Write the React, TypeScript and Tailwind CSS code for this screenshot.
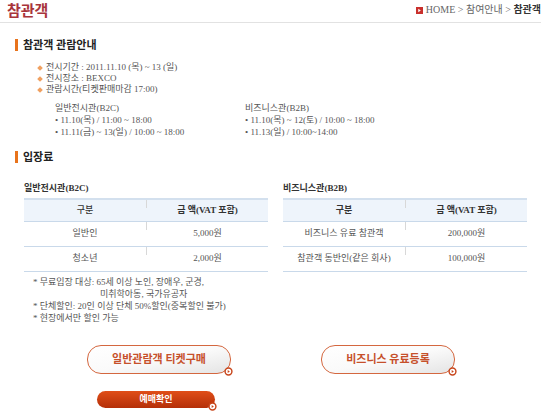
import React from "react";

type Props = { children?: React.ReactNode };

const ArrowDot = ({ className }: { className?: string }) => (
  <svg viewBox="0 0 10 10" className={className}>
    <circle cx="5" cy="5" r="3.8" fill="#fff" stroke="#c8461c" strokeWidth="1.6" />
    <path d="M4.1 3.3 L6.5 5 L4.1 6.7Z" fill="#c8461c" />
  </svg>
);

const SectionTitle = ({ children }: Props) => (
  <div className="flex items-center gap-[5px] pl-[15px] h-[14px]">
    <span className="w-[3px] h-[12px] bg-[#e8731c]" />
    <h2 className="text-[11px] leading-[14px] font-bold text-[#222]">{children}</h2>
  </div>
);

type Row = { label: string; price: string };

const PriceTable = ({ title, rows, boldHead }: { title: string; rows: Row[]; boldHead?: boolean }) => (
  <div className="w-[244px]">
    <div className="text-[9px] leading-[12px] font-bold text-[#333]">{title}</div>
    <div className="mt-[4px] border-t-2 border-[#d3e0ee]">
      <div className="flex h-[22px] bg-[#eef4fb] border-b border-[#c9d9ea] text-[9px] text-[#333]">
        <div className={`w-[122px] flex items-center justify-center ${boldHead ? "font-bold" : "font-medium"}`}>구분</div>
        <span className="w-px h-[8px] bg-[#d8d8d8]" />
        <div className="flex-1 flex items-center justify-center font-bold">금 액(VAT 포함)</div>
      </div>
      {rows.map((r) => (
        <div key={r.label} className="flex h-[25px] border-b border-[#c9d9ea] text-[9px] text-[#555]">
          <div className="w-[122px] flex items-center justify-center">{r.label}</div>
          <span className="w-px h-[8px] bg-[#d8d8d8]" />
          <div className="flex-1 flex items-center justify-center">{r.price}</div>
        </div>
      ))}
    </div>
  </div>
);

export default function App() {
  return (
    <div className="w-[560px] h-[414px] bg-white overflow-hidden font-['Liberation_Serif','Noto_Sans_CJK_KR',serif] text-[#555]">
      {/* page title + breadcrumb */}
      <div className="w-[541px] h-[23px] flex items-end justify-between border-b border-[#e2e2e2] pl-[7px] pb-[3px]">
        <h1 className="text-[15px] leading-[16px] font-bold text-[#a8343b]">참관객</h1>
        <div className="flex items-center gap-[3px] text-[10px] leading-[12px] text-[#666] mb-[3px]">
          <span className="w-[7px] h-[7px] bg-[#c9302c] flex items-center justify-center">
            <svg viewBox="0 0 6 6" className="w-[5px] h-[5px]">
              <path d="M1.5 1 L4.5 3 L1.5 5Z" fill="#fff" />
            </svg>
          </span>
          <span>HOME &gt; 참여안내 &gt; <b className="text-[#333]">참관객</b></span>
        </div>
      </div>

      <div className="mt-[15px]">
        <SectionTitle>참관객 관람안내</SectionTitle>
      </div>

      <ul className="mt-[10px] pl-[38px] text-[9px] leading-[11px]">
        {["전시기간 : 2011.11.10 (목) ~ 13 (일)", "전시장소 : BEXCO", "관람시간(티켓판매마감 17:00)"].map((t) => (
          <li key={t} className="flex items-center gap-[4px]">
            <span className="w-[4px] h-[4px] rotate-45 bg-[#f0a060]" />
            <span>{t}</span>
          </li>
        ))}
      </ul>

      <div className="mt-[7px] pl-[55px] flex text-[9px] leading-[12px]">
        <div className="w-[190px]">
          <div className="text-[#555]">일반전시관(B2C)</div>
          <div>• 11.10(목) / 11:00 ~ 18:00</div>
          <div>• 11.11(금) ~ 13(일) / 10:00 ~ 18:00</div>
        </div>
        <div>
          <div className="text-[#555]">비즈니스관(B2B)</div>
          <div>• 11.10(목) ~ 12(토) / 10:00 ~ 18:00</div>
          <div>• 11.13(일) / 10:00~14:00</div>
        </div>
      </div>

      <div className="mt-[12px]">
        <SectionTitle>입장료</SectionTitle>
      </div>

      <div className="mt-[18px] pl-[24px] flex gap-[15px]">
        <PriceTable
          title="일반전시관(B2C)"
          rows={[
            { label: "일반인", price: "5,000원" },
            { label: "청소년", price: "2,000원" },
          ]}
        />
        <PriceTable
          title="비즈니스관(B2B)"
          boldHead
          rows={[
            { label: "비즈니스 유료 참관객", price: "200,000원" },
            { label: "참관객 동반인(같은 회사)", price: "100,000원" },
          ]}
        />
      </div>

      <div className="mt-[4px] pl-[33px] text-[9px] leading-[12px] text-[#555]">
        <div>* 무료입장 대상: 65세 이상 노인, 장애우, 군경,</div>
        <div className="pl-[67px]">미취학아동, 국가유공자</div>
        <div>* 단체할인: 20인 이상 단체 50%할인(중복할인 불가)</div>
        <div>* 현장에서만 할인 가능</div>
      </div>

      <div className="mt-[21px] pl-[87px] flex gap-[90px]">
        <button className="relative w-[144px] h-[29px] rounded-[14px] border-[1.5px] border-[#d4673f] bg-linear-to-br from-white via-[#fafafa] to-[#e4e4e4] text-[11px] font-bold text-[#c6502b]">
          일반관람객 티켓구매
          <ArrowDot className="absolute -bottom-[3px] -right-[3px] w-[9px] h-[9px]" />
        </button>
        <button className="relative w-[134px] h-[29px] rounded-[14px] border-[1.5px] border-[#d4673f] bg-linear-to-br from-white via-[#fafafa] to-[#e4e4e4] text-[11px] font-bold text-[#c6502b]">
          비즈니스 유료등록
          <ArrowDot className="absolute -bottom-[3px] -right-[3px] w-[9px] h-[9px]" />
        </button>
      </div>

      <div className="mt-[11px] pl-[97px]">
        <button className="relative w-[118px] h-[17px] rounded-full bg-linear-to-b from-[#e04e18] to-[#b52f08] text-[9px] leading-[17px] font-bold text-white">
          예매확인
          <ArrowDot className="absolute -bottom-[3px] -right-[2px] w-[9px] h-[9px]" />
        </button>
      </div>
    </div>
  );
}
